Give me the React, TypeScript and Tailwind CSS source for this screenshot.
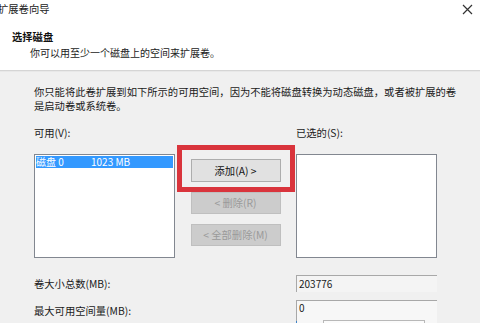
import React from "react";

const FONT = { fontFamily: '"Microsoft YaHei", "Noto Sans CJK SC", "Noto Sans", sans-serif' };

function CloseIcon() {
  return (
    <svg width="11" height="11" viewBox="0 0 11 11" className="shrink-0 text-[#333]">
      <path d="M1 1 L10 10 M10 1 L1 10" stroke="currentColor" strokeWidth="1.2" fill="none" />
    </svg>
  );
}

function ListBox({ children }: { children?: React.ReactNode }) {
  return (
    <div className="h-[104px] w-[141px] border border-[#828790] bg-white p-px">{children}</div>
  );
}

function SideButton({ label, enabled }: { label: string; enabled?: boolean }) {
  return (
    <div
      className={
        enabled
          ? "flex h-[23px] w-[90px] items-center justify-center border border-[#adadad] bg-[#e1e1e1] text-[#111]"
          : "flex h-[22px] w-[90px] items-center justify-center border border-[#bfbfbf] bg-[#cccccc] text-[#9a9a9a]"
      }
    >
      {label}
    </div>
  );
}

export default function App() {
  return (
    <div className="h-[323px] w-[480px] overflow-hidden bg-[#f0f0f0] text-[10.3px] leading-[14px] text-[#1a1a1a]" style={FONT}>
      {/* header */}
      <div className="h-[70px] bg-white">
        <div className="flex h-[18px] items-center justify-between pr-[7px]">
          <span className="ml-[-2px] text-[10.3px] text-[#222]">扩展卷向导</span>
          <CloseIcon />
        </div>
        <div className="ml-[12px] mt-[12px] font-bold text-[#111]">选择磁盘</div>
        <div className="ml-[30px] mt-[2px] text-[10px] text-[#222]">你可以用至少一个磁盘上的空间来扩展卷。</div>
      </div>
      <div className="h-[2px] border-t border-[#d5d5d5] bg-[#e8e8e8]" />

      {/* body */}
      <div className="pl-[34px] pt-[13px]">
        <p className="whitespace-nowrap">
          你只能将此卷扩展到如下所示的可用空间，因为不能将磁盘转换为动态磁盘，或者被扩展的卷
          <br />
          是启动卷或系统卷。
        </p>

        <div className="mt-[13px] flex items-start gap-[7px]">
          <div className="flex flex-col">
            <span className="h-[14px]">可用(V):</span>
            <div className="mt-[14px]">
              <ListBox>
                <div className="flex h-[12px] items-center bg-[#3399ff] text-[10px] leading-[12px] text-white">
                  <span className="w-[55px]">磁盘 0</span>
                  <span>1023 MB</span>
                </div>
              </ListBox>
            </div>
          </div>

          <div className="mt-[19px] flex w-[107px] flex-col items-center">
            <div className="border-[5px] border-[#d9343c] px-[9px] pb-[5px] pt-[9px]">
              <SideButton label="添加(A) >" enabled />
            </div>
            <div className="flex flex-col gap-[10px]">
              <SideButton label="< 删除(R)" />
              <SideButton label="< 全部删除(M)" />
            </div>
          </div>

          <div className="flex flex-col">
            <span className="h-[14px]">已选的(S):</span>
            <div className="mt-[14px]">
              <ListBox />
            </div>
          </div>
        </div>

        <div className="mt-[17px] flex flex-col gap-[8px]">
          <div className="flex items-center">
            <span className="w-[262px]">卷大小总数(MB):</span>
            <div className="flex h-[17px] w-[141px] items-center border-t border-l border-[#a8a8a8] bg-[#f4f4f4] pl-[2px] text-[10px]">
              203776
            </div>
          </div>
          <div className="flex items-start">
            <span className="mt-[4px] w-[262px]">最大可用空间量(MB):</span>
            <div className="relative h-[30px] w-[141px] border-t border-l border-[#a8a8a8] bg-[#f7f7f7] pl-[2px] text-[10px]">
              0
              <div className="absolute left-[26px] top-[19px] h-[8px] w-[102px] border border-[#b8b8b8] bg-[#fbfbfb]" />
              <div className="absolute left-[-1px] top-[20px] h-[8px] w-px bg-[#3c82c8]" />
            </div>
          </div>
        </div>
      </div>
    </div>
  );
}
